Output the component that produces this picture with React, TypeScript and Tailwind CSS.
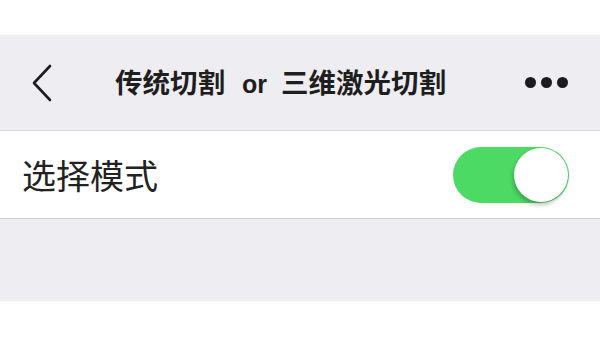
import React from "react";

export default function App() {
  return (
    <div
      className="w-[600px] h-[338px] bg-white flex flex-col"
      style={{ fontFamily: '"Noto Sans CJK SC", "Liberation Sans", sans-serif' }}
    >
      <div className="h-[35px] bg-white" />
      {/* Nav bar */}
      <div className="h-[96px] bg-[#eeedf1] border-b border-[#d6d5d9] flex items-center px-[30px]">
        <svg width="24" height="40" viewBox="0 0 24 40" className="shrink-0">
          <path d="M20 3 L4 20 L20 37" fill="none" stroke="#1c1c1c" strokeWidth="2.6" strokeLinecap="round" strokeLinejoin="round" />
        </svg>
        <div className="ml-[61px] text-[27.5px] font-bold text-[#1e1e1e] whitespace-pre leading-none flex items-baseline">
          <span>传统切割</span>
          <span className="ml-[17px] mr-[14px] text-[25px]" style={{ fontFamily: '"Liberation Sans", sans-serif' }}>or</span>
          <span>三维激光切割</span>
        </div>
        <div className="ml-auto flex gap-[5px] items-center pr-[2px]">
          <span className="w-[11px] h-[11px] rounded-full bg-[#1c1c1c]" />
          <span className="w-[11px] h-[11px] rounded-full bg-[#1c1c1c]" />
          <span className="w-[11px] h-[11px] rounded-full bg-[#1c1c1c]" />
        </div>
      </div>
      {/* Row */}
      <div className="h-[88px] bg-white border-b border-[#cfcfd2] flex items-center justify-between pl-[22px] pr-[31px]">
        <span className="text-[34px] text-[#222] leading-none">选择模式</span>
        <div className="w-[116px] h-[56px] rounded-full bg-[#4cd964] relative">
          <div className="absolute right-[1px] top-[1px] w-[54px] h-[54px] rounded-full bg-white shadow-[-1px_3px_4px_rgba(0,0,0,0.25)]" />
        </div>
      </div>
      <div className="h-[82px] bg-[#eeedf1]" />
      <div className="flex-1 bg-white" />
    </div>
  );
}
